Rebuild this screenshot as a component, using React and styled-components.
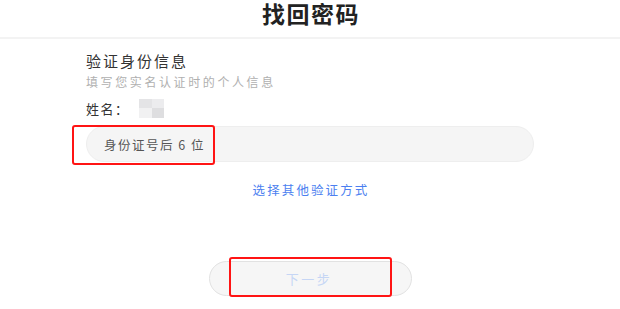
import React from "react";
import styled, { createGlobalStyle } from "styled-components";

const GlobalStyle = createGlobalStyle`
  html, body {
    margin: 0;
    padding: 0;
    background: #ffffff;
    font-family: "Noto Sans CJK SC", "Noto Sans", sans-serif;
  }
`;

const App = () => {
  return (
    <Page>
      <GlobalStyle />
      <Header>
        <Title>找回密码</Title>
      </Header>
      <Main>
        <Heading>验证身份信息</Heading>
        <SubText>填写您实名认证时的个人信息</SubText>
        <NameRow>
          <Label>姓名：</Label>
          <Masked>
            <Cell tone="#e4e4e6" />
            <Cell tone="#ececee" />
            <Cell tone="#f1f1f2" />
            <Cell tone="#dedee0" />
          </Masked>
        </NameRow>
        <InputWrap>
          <IdInput placeholder="身份证号后 6 位" />
          <Mark left={-14} top={-1} width={143} height={40} />
        </InputWrap>
        <LinkRow>
          <OtherLink href="#">选择其他验证方式</OtherLink>
        </LinkRow>
        <ButtonWrap>
          <NextButton disabled>下一步</NextButton>
          <Mark left={20} top={-4} width={163} height={40} />
        </ButtonWrap>
      </Main>
    </Page>
  );
};

export default App;

const Page = styled.div`
  width: 620px;
  height: 309px;
  overflow: hidden;
`;

const Header = styled.div`
  box-sizing: border-box;
  height: 39px;
  padding-top: 1px;
  border-bottom: 2px solid #f3f3f3;
  display: flex;
  justify-content: center;
  align-items: flex-start;
`;

const Title = styled.h1`
  margin: 0;
  padding-left: 2px;
  font-size: 23px;
  line-height: 24px;
  font-weight: 700;
  letter-spacing: 1.5px;
  color: #222;
`;

const Main = styled.div`
  width: 448px;
  margin: 0 auto;
  padding-top: 12px;
  display: flex;
  flex-direction: column;
`;

const Heading = styled.div`
  font-size: 15px;
  line-height: 20px;
  letter-spacing: 2px;
  color: #333;
`;

const SubText = styled.div`
  margin-top: 3px;
  font-size: 12px;
  line-height: 16px;
  letter-spacing: 2.6px;
  color: #b0b0b0;
`;

const NameRow = styled.div`
  margin-top: 8px;
  height: 20px;
  display: flex;
  align-items: center;
`;

const Label = styled.span`
  width: 53px;
  font-size: 13px;
  letter-spacing: 1.5px;
  color: #333;
`;

const Masked = styled.div`
  width: 25px;
  height: 19px;
  display: grid;
  grid-template-columns: 1fr 1fr;
  grid-template-rows: 1fr 1fr;
  filter: blur(0.6px);
`;

const Cell = styled.div`
  background: ${(p) => p.tone};
`;

const InputWrap = styled.div`
  position: relative;
  margin-top: 8px;
`;

const IdInput = styled.input`
  box-sizing: border-box;
  width: 448px;
  height: 36px;
  padding: 0 0 0 17px;
  border: 1px solid #eeeeee;
  border-radius: 18px;
  background: #f5f5f5;
  outline: none;
  font-family: inherit;
  font-size: 12.5px;
  letter-spacing: 1.5px;
  color: #444;

  &::placeholder {
    color: #555;
  }
`;

const Mark = styled.div`
  position: absolute;
  left: ${(p) => p.left}px;
  top: ${(p) => p.top}px;
  width: ${(p) => p.width}px;
  height: ${(p) => p.height}px;
  box-sizing: border-box;
  border: 2px solid #ff1414;
  border-radius: 3px;
  pointer-events: none;
`;

const LinkRow = styled.div`
  margin-top: 19px;
  display: flex;
  justify-content: center;
`;

const OtherLink = styled.a`
  padding-left: 2px;
  font-size: 12.5px;
  line-height: 18px;
  letter-spacing: 2.1px;
  color: #4c7ff0;
  text-decoration: none;
`;

const ButtonWrap = styled.div`
  position: relative;
  align-self: center;
  margin-top: 62px;
  margin-left: 1px;
`;

const NextButton = styled.button`
  box-sizing: border-box;
  width: 203px;
  height: 35px;
  border: 1px solid #e2e2e2;
  border-radius: 18px;
  background: #f6f6f6;
  font-family: inherit;
  font-size: 13px;
  letter-spacing: 2.5px;
  padding-left: 3px;
  color: #c6d6f5;
`;
